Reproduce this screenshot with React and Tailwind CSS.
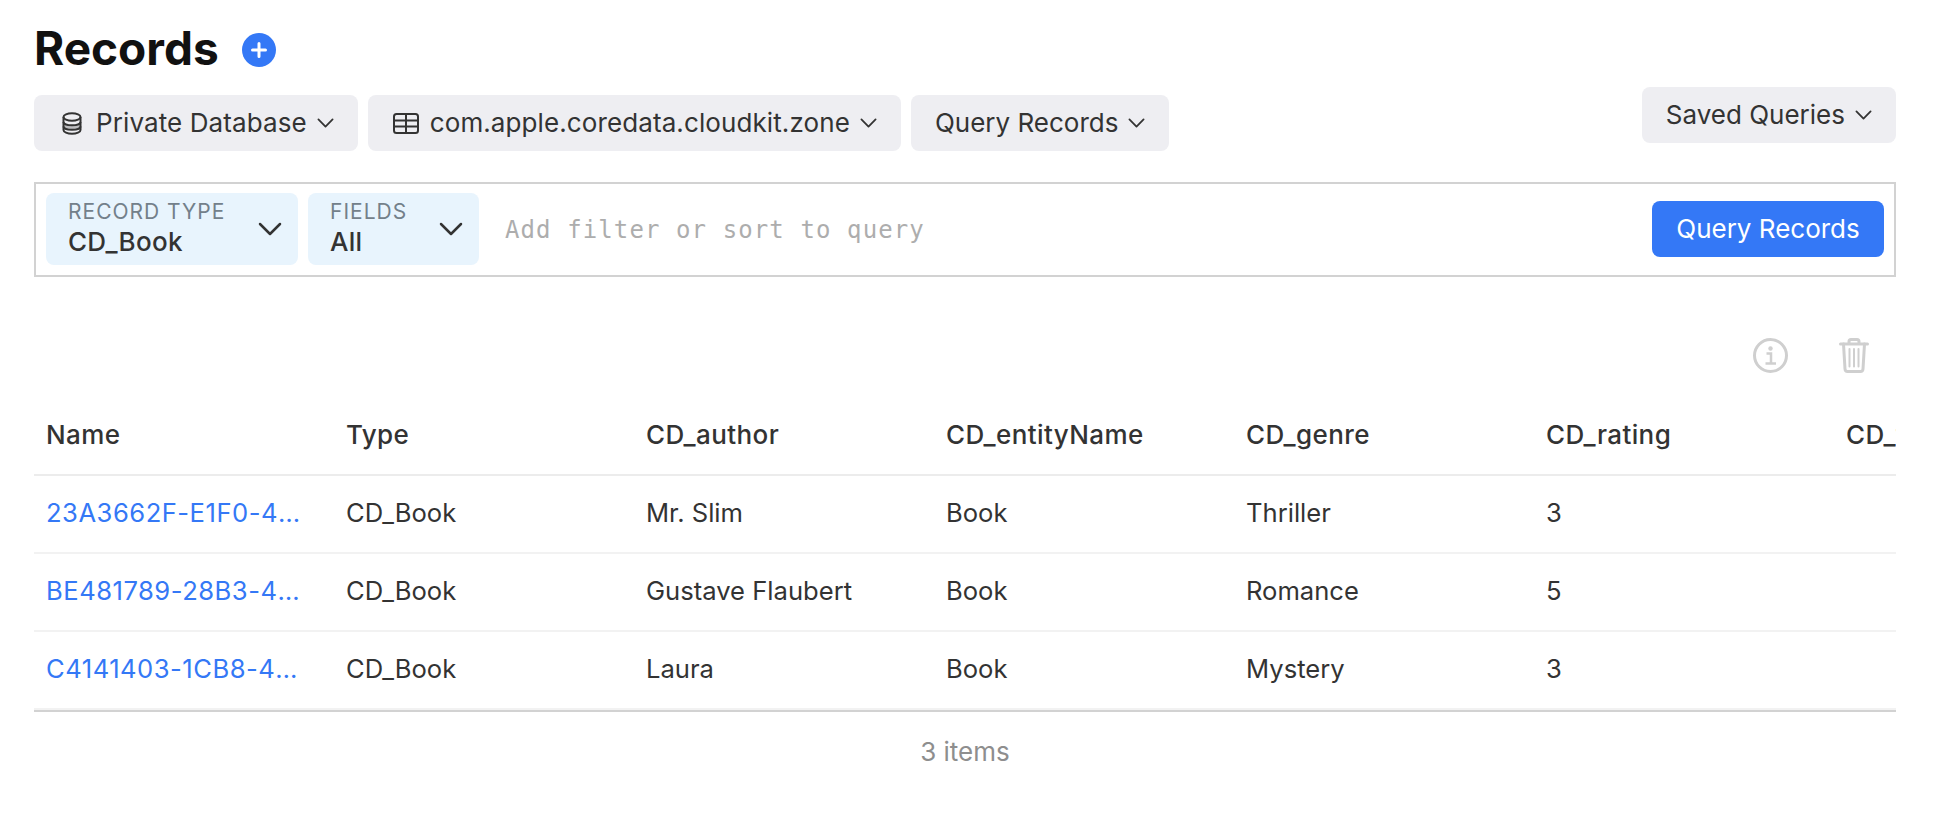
import { useState } from 'react';

const columns = ['Name', 'Type', 'CD_author', 'CD_entityName', 'CD_genre', 'CD_rating', 'CD_title'];

const rows = [
  ['23A3662F-E1F0-4B5A-9C11-7D2E', 'CD_Book', 'Mr. Slim', 'Book', 'Thriller', '3', ''],
  ['BE481789-28B3-4C0D-8E52-1A6F', 'CD_Book', 'Gustave Flaubert', 'Book', 'Romance', '5', ''],
  ['C4141403-1CB8-4F7E-A3D4-92B0', 'CD_Book', 'Laura', 'Book', 'Mystery', '3', ''],
];

function Chevron({ className, strokeWidth = 2 }) {
  return (
    <svg className={className} viewBox="0 0 24 14" fill="none" stroke="currentColor" strokeWidth={strokeWidth} strokeLinecap="round" strokeLinejoin="round">
      <path d="M2 2l10 10L22 2" />
    </svg>
  );
}

function DatabaseIcon() {
  return (
    <svg className="w-[20px] h-[23px] shrink-0" viewBox="0 0 20 23" fill="none" stroke="#333" strokeWidth="2">
      <path d="M1.500 10c0 1.900 3.800 3.300 8.500 3.300s8.500-1.400 8.500-3.300v4.500c0 1.900-3.800 3.300-8.500 3.300s-8.500-1.400-8.500-3.300z" fill="#bdbdc0" stroke="none" />
      <ellipse cx="10" cy="5" rx="8.500" ry="3.800" />
      <path d="M1.500 5v13c0 2.100 3.800 3.800 8.500 3.800s8.500-1.700 8.500-3.800V5" />
      <path d="M1.500 10c0 1.900 3.800 3.300 8.500 3.300s8.500-1.400 8.500-3.300M1.500 14.500c0 1.900 3.800 3.300 8.500 3.300s8.500-1.400 8.500-3.300" />
    </svg>
  );
}

function TableIcon() {
  return (
    <svg className="w-[26px] h-[21px] shrink-0" viewBox="0 0 26 21" fill="none" stroke="#333" strokeWidth="2">
      <rect x="1" y="1" width="24" height="19" rx="2.500" />
      <path d="M1 7.500h24M1 13.500h24M13 1v19" />
    </svg>
  );
}

function InfoIcon() {
  return (
    <svg className="w-[35px] h-[35px]" viewBox="0 0 35 35" fill="none" stroke="#cfcfcf" strokeWidth="3">
      <circle cx="17.500" cy="17.500" r="16" />
      <circle cx="17.500" cy="10.500" r="2.200" fill="#cfcfcf" stroke="none" />
      <path d="M13.500 15.500H18V25M12.500 25.500h10.500" strokeWidth="2.500" />
    </svg>
  );
}

function TrashIcon() {
  return (
    <svg className="w-[30px] h-[35px]" viewBox="0 0 30 35" fill="none" stroke="#cfcfcf" strokeWidth="3" strokeLinecap="round">
      <path d="M1.500 6h27M10 6V3.500C10 2.400 10.900 1.500 12 1.500h6c1.100 0 2 .9 2 2V6" />
      <path d="M4.500 6l1.500 25c.1 1.400 1 2.500 2.500 2.500h13c1.500 0 2.400-1.100 2.500-2.500L25.500 6" />
      <path d="M10.500 11v17.500M15 11v17.500M19.500 11v17.500" strokeWidth="2" />
    </svg>
  );
}

function MenuButton({ children, label, labelClass = '' }) {
  return (
    <button className="h-14 pl-[24px] pr-[24px] flex items-center rounded-lg bg-[#eeeef2] text-[26px] text-[#333] whitespace-nowrap">
      {children}
      <span className={`pb-[2px] ${labelClass}`}>{label}</span>
      <Chevron className="w-[17px] h-[10px] ml-[10px]" strokeWidth={2.500} />
    </button>
  );
}

function FilterChip({ label, value, width }) {
  return (
    <button className={`${width} h-[72px] pl-[22px] pr-[16px] flex items-center justify-between rounded-lg bg-[#e8f4fd] text-left`}>
      <span className="flex flex-col pb-[2px]">
        <span className="text-[21px] leading-[28px] text-[#73808a] tracking-[1px]">{label}</span>
        <span className="text-[26px] leading-[32px] font-medium text-[#333] tracking-[0.3px]">{value}</span>
      </span>
      <Chevron className="w-[24px] h-[14px] text-[#333]" strokeWidth={2.500} />
    </button>
  );
}

export default function App() {
  const [query, setQuery] = useState('');

  return (
    <div className="w-[1942px] h-[822px] bg-white pl-[34px] pr-[46px] pt-[22px] font-['Inter',sans-serif] overflow-hidden">
      <div className="flex items-center h-[56px] gap-[23px]">
        <h1 className="text-[46px] leading-[56px] font-bold text-[#111] mb-[4px]">Records</h1>
        <button className="w-[34px] h-[34px] rounded-full bg-[#3478f6] flex items-center justify-center">
          <svg className="w-[18px] h-[18px]" viewBox="0 0 18 18" stroke="#fff" strokeWidth="3" strokeLinecap="round">
            <path d="M9 2.500v13M2.500 9h13" />
          </svg>
        </button>
      </div>

      <div className="flex items-end justify-between mt-[9px]">
        <div className="flex gap-[10px]">
          <MenuButton label="Private Database" labelClass="tracking-[0.1px]">
            <span className="ml-[4px] mr-[14px] flex"><DatabaseIcon /></span>
          </MenuButton>
          <MenuButton label="com.apple.coredata.cloudkit.zone" labelClass="tracking-[0.1px]">
            <span className="ml-[1px] mr-[11px] flex"><TableIcon /></span>
          </MenuButton>
          <MenuButton label="Query Records" />
        </div>
        <div className="mb-2">
          <MenuButton label="Saved Queries" />
        </div>
      </div>

      <div className="mt-[31px] h-[95px] border-2 border-[#d2d2d2] flex items-center pl-[10px] pr-[10px] pb-[1px] gap-[10px]">
        <FilterChip label="RECORD TYPE" value="CD_Book" width="w-[252px]" />
        <FilterChip label="FIELDS" value="All" width="w-[171px]" />
        <input
          value={query}
          onChange={(e) => setQuery(e.target.value)}
          placeholder="Add filter or sort to query"
          className="flex-1 min-w-0 ml-[16px] mt-[2px] h-14 outline-none font-['DejaVu_Sans_Mono',monospace] text-[24px] tracking-[1.1px] placeholder:text-[#adadad]"
        />
        <button className="w-[232px] h-14 shrink-0 rounded-lg bg-[#3478f6] text-white text-[26px] pb-[2px]">
          Query Records
        </button>
      </div>

      <div className="flex justify-end items-center gap-[51px] mt-[61px] pr-[27px]">
        <InfoIcon />
        <TrashIcon />
      </div>

      <div className="overflow-hidden mt-[23px] border-b-2 border-[#d2d2d2]">
        <table className="w-[2100px] table-fixed border-collapse text-[25.6px] text-[#333]">
          <thead>
            <tr className="h-[79px] border-b-2 border-[#ececec]">
              {columns.map((c) => (
                <th key={c} className="pl-[12px] pb-[1px] text-left text-[26px] font-medium tracking-[0.4px]">{c}</th>
              ))}
            </tr>
          </thead>
          <tbody>
            {rows.map((row) => (
              <tr key={row[0]} className="h-[78px] border-b-2 border-[#f2f2f2]">
                {row.map((cell, i) => (
                  <td key={i} className="pl-[12px] pr-[32px] pb-[2px]">
                    {i === 0 ? (
                      <a className="block truncate text-[#3478f6] tracking-[0.5px]">{cell}</a>
                    ) : (
                      <span>{cell}</span>
                    )}
                  </td>
                ))}
              </tr>
            ))}
          </tbody>
        </table>
      </div>

      <div className="mt-[24px] text-center text-[26px] leading-[32px] text-[#8e8e8e]">3 items</div>
    </div>
  );
}
